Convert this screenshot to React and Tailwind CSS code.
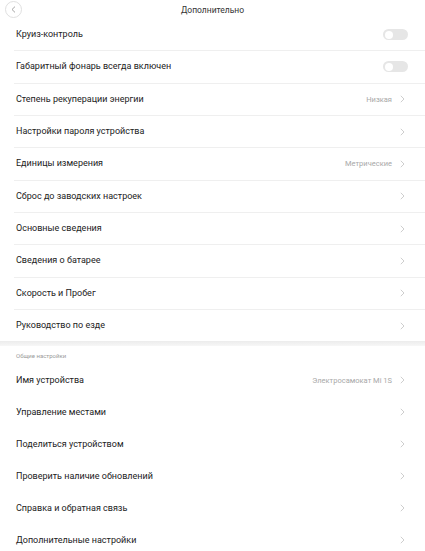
import React from "react";

const topRows = [
  { label: "Круиз-контроль", toggle: true },
  { label: "Габаритный фонарь всегда включен", toggle: true },
  { label: "Степень рекуперации энергии", value: "Низкая" },
  { label: "Настройки пароля устройства" },
  { label: "Единицы измерения", value: "Метрические" },
  { label: "Сброс до заводских настроек" },
  { label: "Основные сведения" },
  { label: "Сведения о батарее" },
  { label: "Скорость и Пробег" },
  { label: "Руководство по езде" },
];

const bottomRows = [
  { label: "Имя устройства", value: "Электросамокат Mi 1S" },
  { label: "Управление местами" },
  { label: "Поделиться устройством" },
  { label: "Проверить наличие обновлений" },
  { label: "Справка и обратная связь" },
  { label: "Дополнительные настройки" },
];

const Chevron = () => (
  <svg width="5" height="8" viewBox="0 0 5 8" className="ml-[8px]">
    <path d="M0.8 0.8 L4 4 L0.8 7.2" fill="none" stroke="#c8c8c8" strokeWidth="0.9" />
  </svg>
);

const Toggle = () => (
  <div className="-mr-[3px] w-[25px] h-[11px] rounded-full bg-[#e6e6e6] flex items-center px-[1.5px]">
    <div className="w-[8px] h-[8px] rounded-full bg-white" />
  </div>
);

const Row = ({ item, height }) => (
  <div className={`flex items-center pl-4 pr-[20px] ${height}`}>
    <span className="flex-1 text-[9px] text-[#222]">{item.label}</span>
    {item.toggle ? (
      <Toggle />
    ) : (
      <div className="flex items-center">
        {item.value && <span className="text-[7.5px] text-[#a8a8a8]">{item.value}</span>}
        <Chevron />
      </div>
    )}
  </div>
);

export default function App() {
  return (
    <div className="w-[425px] h-[551px] overflow-hidden bg-white" style={{ fontFamily: 'Roboto, "Liberation Sans", Arial, sans-serif' }}>
      {/* Header */}
      <div className="relative h-[19px] flex items-center justify-center pt-[1px]">
        <div className="absolute left-[5px] top-[1px] w-[17px] h-[17px] rounded-full border border-[#e0e0e0] flex items-center justify-center">
          <svg width="5" height="7" viewBox="0 0 5 7">
            <path d="M4 0.6 L1 3.5 L4 6.4" fill="none" stroke="#9a9a9a" strokeWidth="0.9" />
          </svg>
        </div>
        <span className="text-[8.5px] text-[#333]">Дополнительно</span>
      </div>

      {/* Device settings */}
      <div>
        {topRows.map((item, i) => (
          <div key={i}>
            <Row item={item} height="h-[31.33px]" />
            {i < topRows.length - 1 && <div className="ml-[14px] h-px bg-[#efefef]" />}
          </div>
        ))}
      </div>

      <div className="h-[5px] bg-gradient-to-b from-[#ececec] to-[#f7f7f7]" />

      {/* General settings */}
      <div className="h-[18px] flex items-center pl-4">
        <span className="text-[6px] text-[#9a9a9a]">Общие настройки</span>
      </div>
      <div>
        {bottomRows.map((item, i) => (
          <Row key={i} item={item} height="h-[32px]" />
        ))}
      </div>
    </div>
  );
}
